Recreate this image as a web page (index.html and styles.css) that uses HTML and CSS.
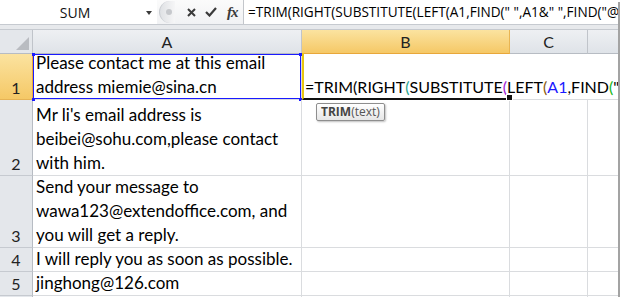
FILE: index.html
```html
<!DOCTYPE html>
<html>
  <head>
    <meta charset="utf-8">
    <title>TRIM formula</title>
    <link rel="stylesheet" href="styles.css">
  </head>
  <body>
    <div class="window">

      <div class="formulaBar">
        <div class="nameBox">
          <span class="nameText">SUM</span>
          <span class="caret"></span>
        </div>
        <div class="fxButtons">
          <span class="grip"><span class="dot"></span></span>
          <svg class="cancel" width="9" height="9" viewBox="0 0 9 9">
            <path d="M1 1 L8 8 M8 1 L1 8" stroke="#3a3a3a" stroke-width="2" fill="none"/>
          </svg>
          <svg class="enter" width="12" height="10" viewBox="0 0 12 10">
            <path d="M1 5 L4.5 8.5 L11 1" stroke="#3a3a3a" stroke-width="2.2" fill="none"/>
          </svg>
          <span class="fx">fx</span>
        </div>
        <div class="formulaInput">=TRIM(RIGHT(SUBSTITUTE(LEFT(A1,FIND(" ",A1&amp;" ",FIND("@",A1)-1))," ",REPT(" ",100)),100))</div>
      </div>

      <div class="gap"></div>

      <div class="sheet">
        <!-- header row -->
        <div class="corner"><span class="tri"></span></div>
        <div class="colHead">A</div>
        <div class="colHead active">B</div>
        <div class="colHead">C</div>
        <div class="colHead last"></div>

        <!-- row 1 -->
        <div class="rowHead active">1</div>
        <div class="cell ref">
          <span class="text">Please contact me at this email<br>address miemie@sina.cn</span>
          <span class="knob k1"></span><span class="knob k2"></span>
          <span class="knob k3"></span><span class="knob k4"></span>
        </div>
        <div class="cell editRow">
          <div class="editor">
            <span class="text">=TRIM(RIGHT<span class="p1">(</span>SUBSTITUTE<span class="p2">(</span>LEFT<span class="p3">(</span><span class="a1">A1</span>,FIND<span class="p4">(</span>"</span>
            <span class="handle"></span>
          </div>
          <div class="tip"><b>TRIM</b>(text)</div>
        </div>

        <!-- row 2 -->
        <div class="rowHead">2</div>
        <div class="cell"><span class="text">Mr li's email address is<br>beibei@sohu.com,please contact<br>with him.</span></div>
        <div class="cell"></div>
        <div class="cell"></div>
        <div class="cell last"></div>

        <!-- row 3 -->
        <div class="rowHead">3</div>
        <div class="cell"><span class="text">Send your message to<br>wawa123@extendoffice.com, and<br>you will get a reply.</span></div>
        <div class="cell"></div>
        <div class="cell"></div>
        <div class="cell last"></div>

        <!-- row 4 -->
        <div class="rowHead">4</div>
        <div class="cell"><span class="text">I will reply you as soon as possible.</span></div>
        <div class="cell"></div>
        <div class="cell"></div>
        <div class="cell last"></div>

        <!-- row 5 -->
        <div class="rowHead">5</div>
        <div class="cell"><span class="text">jinghong@126.com</span></div>
        <div class="cell"></div>
        <div class="cell"></div>
        <div class="cell last"></div>

        <!-- row 6 (cut off) -->
        <div class="rowHead"></div>
        <div class="cell"></div>
        <div class="cell"></div>
        <div class="cell"></div>
        <div class="cell last"></div>
      </div>

    </div>
  </body>
</html>
```

FILE: styles.css
```css
html, body {
  margin: 0;
  background: #ffffff;
}

.window {
  width: 618px;
  height: 297px;
  overflow: hidden;
  background: #ffffff;
  box-shadow: 2px 2px 0 #a3a3a3;
  font-family: Lato, "Liberation Sans", sans-serif;
}

/* formula bar */

.formulaBar {
  display: flex;
  height: 24px;
  border-bottom: 1px solid #c6cad0;
  background: #ffffff;
}

.nameBox {
  width: 157px;
  display: flex;
  align-items: center;
  position: relative;
}

.nameText {
  flex: 1;
  text-align: center;
  font-family: "Open Sans", sans-serif;
  font-size: 14px;
  color: #111;
  padding-left: 4px;
}

.caret {
  width: 0;
  height: 0;
  border-left: 3.5px solid transparent;
  border-right: 3.5px solid transparent;
  border-top: 4px solid #3a3a3a;
  margin-right: 5px;
  margin-top: 2px;
}

.fxButtons {
  width: 86px;
  display: flex;
  align-items: center;
  border-right: 1px solid #c3c6cb;
  background: linear-gradient(#fbfbfb, #f1f2f4);
}

.grip {
  width: 15px;
  height: 22px;
  margin-left: 2px;
  border-radius: 12px 0 0 12px;
  border-left: 1px solid #c9ccd1;
  background: linear-gradient(90deg, #dfe1e4, #f6f6f7);
  display: flex;
  align-items: center;
  justify-content: center;
}

.dot {
  width: 6px;
  height: 6px;
  border-radius: 50%;
  background: #c6c8cc;
  margin-left: 2px;
}

.cancel {
  margin-left: 12px;
}

.enter {
  margin-left: 9px;
}

.fx {
  margin-left: 10px;
  font-family: "Liberation Serif", serif;
  font-style: italic;
  font-weight: bold;
  font-size: 15px;
  color: #3a3a3a;
  letter-spacing: -1px;
}

.formulaInput {
  flex: 1;
  padding-left: 4px;
  font-family: "Open Sans", sans-serif;
  font-size: 13.6px;
  line-height: 24px;
  white-space: nowrap;
  overflow: hidden;
  color: #000;
}

.gap {
  height: 4px;
  background: #e7e9ec;
}

/* sheet grid */

.sheet {
  display: grid;
  grid-template-columns: 33px 269px 208px 78px 1fr;
  grid-template-rows: 24px 46px 76px 72px 24px 24px 1fr;
  height: 268px;
  border-top: 1px solid #c6cad0;
}

.corner {
  background: #e4e7eb;
  border-right: 1px solid #c0c4ca;
  border-bottom: 1px solid #b7bcc3;
  position: relative;
}

.tri {
  position: absolute;
  right: 3px;
  bottom: 3px;
  width: 0;
  height: 0;
  border-left: 13px solid transparent;
  border-bottom: 13px solid #b9bcc1;
}

.colHead {
  background: linear-gradient(#eef0f3, #dfe3e8);
  border-right: 1px solid #c0c4ca;
  border-bottom: 1px solid #b7bcc3;
  text-align: center;
  font-size: 16px;
  line-height: 23px;
  color: #222;
}

.colHead.active {
  background: linear-gradient(#fbe3a0, #f5c866);
  border-bottom-color: #e8a73a;
  border-right-color: #e9b552;
}

.colHead.last,
.cell.last {
  border-right: none;
}

.rowHead {
  background: #e4e7eb;
  border-right: 1px solid #b7bcc3;
  border-bottom: 1px solid #c6cad0;
  text-align: center;
  font-size: 16px;
  line-height: 22px;
  color: #222;
  display: flex;
  align-items: flex-end;
  justify-content: center;
}

.rowHead.active {
  background: linear-gradient(#fbe3a0, #f5c866);
  border-right-color: #e8a73a;
  border-bottom-color: #e6b355;
}

.cell {
  border-right: 1px solid #dadcdf;
  border-bottom: 1px solid #dadcdf;
  display: flex;
  align-items: flex-end;
  overflow: hidden;
  font-size: 17px;
  line-height: 24px;
  color: #000;
  position: relative;
}

.cell .text {
  padding-left: 3px;
  white-space: nowrap;
}

/* A1 reference highlight */

.cell.ref {
  overflow: visible;
  box-shadow: inset 0 0 0 1px #1a1aff;
}

.knob {
  position: absolute;
  width: 3px;
  height: 3px;
  background: #1a1aff;
}

.k1 { left: -1px; top: -1px; }
.k2 { right: -1px; top: -1px; }
.k3 { left: -1px; bottom: -2px; }
.k4 { right: -1px; bottom: -2px; }

/* B1 in edit mode, overflowing into C1 and D1 */

.cell.editRow {
  grid-column: 3 / 6;
  border-right: none;
  overflow: visible;
  z-index: 2;
}

.editor {
  width: 206px;
  height: 100%;
  border-left: 2px solid #e8c60f;
  border-bottom: 2px solid #111;
  margin-bottom: -1px;
  display: flex;
  align-items: flex-end;
  position: relative;
  font-size: 16px;
}

.editor .text {
  padding-left: 1px;
  line-height: 22px;
}

.handle {
  position: absolute;
  right: -3px;
  bottom: -3px;
  width: 5px;
  height: 5px;
  background: #111;
  border: 1px solid #fff;
}

.p1 { color: #1fa58e; }
.p2 { color: #a020d8; }
.p3 { color: #8a5a10; }
.p4 { color: #18b818; }
.a1 { color: #1a1aff; }

.tip {
  position: absolute;
  left: 14px;
  top: 49px;
  padding: 0 4px;
  height: 16px;
  line-height: 16px;
  font-family: "Open Sans", sans-serif;
  font-size: 12px;
  color: #555;
  background: linear-gradient(#ffffff, #e6e6e6);
  border: 1px solid #8e8e8e;
  border-radius: 2px;
  box-shadow: 1px 1px 2px rgba(0, 0, 0, 0.25);
}

.tip b {
  color: #444;
}
```
